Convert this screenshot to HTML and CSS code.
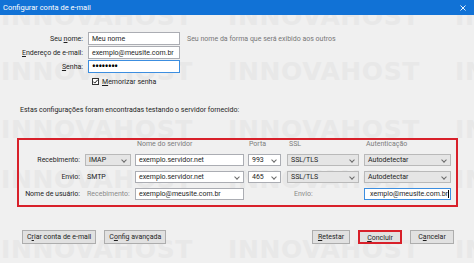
FILE: index.html
```html
<!DOCTYPE html>
<html lang="pt-BR">
  <head>
    <meta charset="UTF-8" />
    <meta name="viewport" content="width=device-width, initial-scale=1.0" />
    <title>Configurar conta de e-mail</title>
    <link rel="stylesheet" href="styles.css">
  </head>
  <body>
    <div class="window">
      <div class="titlebar">
        <span class="title">Configurar conta de e-mail</span>
        <svg class="close" width="6" height="6" viewBox="0 0 6 6">
          <path d="M0.5 0.5L5.5 5.5M5.5 0.5L0.5 5.5" />
        </svg>
      </div>

      <div class="dialog">
        <!-- marca d'agua por tras do conteudo -->
        <div class="watermark" aria-hidden="true">
          <div class="wm-row wm-1"><span>INNOVAHOST</span><span>INNOVAHOST</span><span>INNOVAHOST</span></div>
          <div class="wm-row wm-2"><span>INNOVAHOST</span><span>INNOVAHOST</span><span>INNOVAHOST</span></div>
          <div class="wm-row wm-3"><span>INNOVAHOST</span><span>INNOVAHOST</span><span>INNOVAHOST</span></div>
          <div class="wm-row wm-4"><span>INNOVAHOST</span><span>INNOVAHOST</span><span>INNOVAHOST</span></div>
          <div class="wm-row wm-5"><span>INNOVAHOST</span><span>INNOVAHOST</span><span>INNOVAHOST</span></div>
        </div>

        <div class="identity">
          <label class="lbl">Seu <u>n</u>ome:</label>
          <div class="field">Meu nome</div>
          <span class="hint">Seu nome da forma que será exibido aos outros</span>

          <label class="lbl"><u>E</u>ndereço de e-mail:</label>
          <div class="field">exemplo@meusite.com.br</div>
          <span></span>

          <label class="lbl"><u>S</u>enha:</label>
          <div class="field focus"><span class="dots">••••••••</span></div>
          <span></span>
        </div>

        <div class="remember">
          <span class="check">
            <svg width="7" height="7" viewBox="0 0 7 7">
              <path d="M1.3 3.6L2.8 5.1L5.8 1.7" />
            </svg>
          </span>
          <span><u>M</u>emorizar senha</span>
        </div>

        <p class="found">Estas configurações foram encontradas testando o servidor fornecido:</p>

        <div class="servers">
          <span></span>
          <span></span>
          <span class="head">Nome do servidor</span>
          <span class="head">Porta</span>
          <span class="head">SSL</span>
          <span class="head">Autenticação</span>

          <span class="lbl">Recebimento:</span>
          <div class="select w-proto">IMAP<i class="chev"></i></div>
          <div class="field w-host">exemplo.servidor.net</div>
          <div class="combo w-port">993<i class="chev"></i></div>
          <div class="select w-ssl">SSL/TLS<i class="chev"></i></div>
          <div class="select w-auth">Autodetectar<i class="chev"></i></div>

          <span class="lbl">Envio:</span>
          <span class="plain">SMTP</span>
          <div class="combo w-host">exemplo.servidor.net<i class="chev"></i></div>
          <div class="combo w-port">465<i class="chev"></i></div>
          <div class="select w-ssl">SSL/TLS<i class="chev"></i></div>
          <div class="select w-auth">Autodetectar<i class="chev"></i></div>

          <span class="lbl">Nome de usuário:</span>
          <span class="plain muted">Recebimento:</span>
          <div class="field w-host">exemplo@meusite.com.br</div>
          <span></span>
          <span class="plain muted envio">Envio:</span>
          <div class="field focus w-auth scrolled"><span>xemplo@meusite.com.br</span><i class="caret"></i></div>
        </div>

        <div class="actions">
          <div class="group">
            <button class="btn">C<u>r</u>iar conta de e-mail</button>
            <button class="btn">C<u>o</u>nfig avançada</button>
          </div>
          <div class="group">
            <button class="btn compact"><u>R</u>etestar</button>
            <button class="btn primary"><u>C</u>oncluir</button>
            <button class="btn">C<u>a</u>ncelar</button>
          </div>
        </div>
      </div>
    </div>
  </body>
</html>
```

FILE: styles.css
```css
html,
body {
  margin: 0;
  padding: 0;
}

body {
  font-family: Roboto, "Liberation Sans", sans-serif;
  font-size: 7px;
  color: #1e1e1e;
  width: 474px;
  height: 263px;
  overflow: hidden;
}

u {
  text-decoration-thickness: 1px;
  text-underline-offset: 1px;
}

.window {
  display: flex;
  flex-direction: column;
  height: 263px;
  background-color: #f0f0f0;
}

.titlebar {
  height: 15px;
  flex-shrink: 0;
  display: flex;
  align-items: center;
  justify-content: space-between;
  padding: 0 8px 0 3px;
  background-color: #1172d6;
  color: #ffffff;
  font-size: 7.5px;
}

.close {
  stroke: #ffffff;
  stroke-width: 0.9;
  fill: none;
}

.dialog {
  position: relative;
  flex: 1;
  overflow: hidden;
}

/* marca d'agua */
.watermark {
  position: absolute;
  inset: 0;
  z-index: 0;
}

.wm-row {
  position: absolute;
  left: 1px;
  white-space: nowrap;
  font-family: "DejaVu Sans", sans-serif;
  font-weight: bold;
  font-size: 25px;
  line-height: 25px;
  letter-spacing: 0.6px;
  color: #e8e8e8;
}

.wm-row span {
  display: inline-block;
  width: 227px;
}

.wm-1 { top: -11px; }
.wm-2 { top: 44px; }
.wm-3 { top: 102px; }
.wm-4 { top: 152px; }
.wm-5 { top: 222px; }

.identity,
.remember,
.found,
.servers,
.actions {
  position: relative;
  z-index: 1;
}

/* campos basicos */
.field,
.select,
.combo {
  box-sizing: border-box;
  height: 12px;
  display: flex;
  align-items: center;
  padding: 0 3px;
  border: 1px solid #abadb3;
  background-color: #ffffff;
  white-space: nowrap;
  overflow: hidden;
  position: relative;
}

.field.focus {
  border-color: #3c8ee0;
}

.select {
  background-color: #e5e5e5;
  border-color: #b9b9b9;
}

.chev {
  position: absolute;
  right: 4px;
  top: 3px;
  width: 3px;
  height: 3px;
  border-right: 1px solid #6a6a6a;
  border-bottom: 1px solid #6a6a6a;
  transform: rotate(45deg);
}

.lbl {
  text-align: right;
  white-space: nowrap;
}

/* nome / e-mail / senha */
.identity {
  margin-top: 17px;
  display: grid;
  grid-template-columns: 83px 92px auto;
  grid-auto-rows: 13px;
  column-gap: 5px;
  row-gap: 1px;
  align-items: center;
}

.identity .field {
  height: 13px;
}

.hint {
  margin-left: 2px;
  color: #777777;
  white-space: nowrap;
}

.dots {
  font-size: 10px;
  font-weight: bold;
  letter-spacing: -0.4px;
  color: #000000;
  line-height: 10px;
}

.remember {
  margin: 4px 0 0 92px;
  display: flex;
  align-items: center;
  gap: 3px;
  height: 9px;
}

.check {
  box-sizing: border-box;
  width: 7px;
  height: 7px;
  border: 1px solid #333333;
  background-color: #ffffff;
  display: flex;
}

.check svg {
  margin: -1px;
  stroke: #222222;
  stroke-width: 1;
  fill: none;
}

.found {
  margin: 19px 0 0 20px;
  line-height: 10px;
}

/* servidores */
.servers {
  margin: 23px 16px 0 17px;
  border: 2px solid #d8202a;
  padding: 0 5px 5px 0;
  display: grid;
  grid-template-columns: 66px 50px 113px 39px 77px 87px;
  grid-template-rows: 9px 12px 12px 12px;
  row-gap: 5px;
  align-items: center;
  line-height: 9px;
}

.servers .head {
  padding-left: 2px;
  color: #7d7d7d;
  align-self: end;
  white-space: nowrap;
}

.servers .head:nth-child(4) {
  padding-left: 1px;
}

.servers .lbl {
  padding-right: 5px;
}

.w-proto { width: 46px; }
.w-host { width: 109px; }
.w-port { width: 33px; }
.w-ssl { width: 72px; }
.w-auth { width: 87px; }

.plain {
  padding-left: 2px;
  white-space: nowrap;
}

.muted {
  color: #8a8a8a;
}

.envio {
  padding-left: 7px;
}

.scrolled {
  justify-content: flex-end;
  padding: 0 1px 0 0;
}

.caret {
  width: 1px;
  height: 8px;
  background-color: #000000;
}

/* botoes */
.actions {
  margin-top: 23px;
  padding: 0 20px 0 22px;
  display: flex;
  justify-content: space-between;
}

.group {
  display: flex;
  gap: 8px;
}

.btn {
  box-sizing: border-box;
  height: 14px;
  min-width: 44px;
  padding: 0 4px;
  border: 1px solid #adadad;
  background-color: #e1e1e1;
  font-family: inherit;
  font-size: 7px;
  color: #1e1e1e;
  line-height: 12px;
}

.btn.compact {
  min-width: 38px;
}

.btn.primary {
  border: 2px solid #d8202a;
}
```
